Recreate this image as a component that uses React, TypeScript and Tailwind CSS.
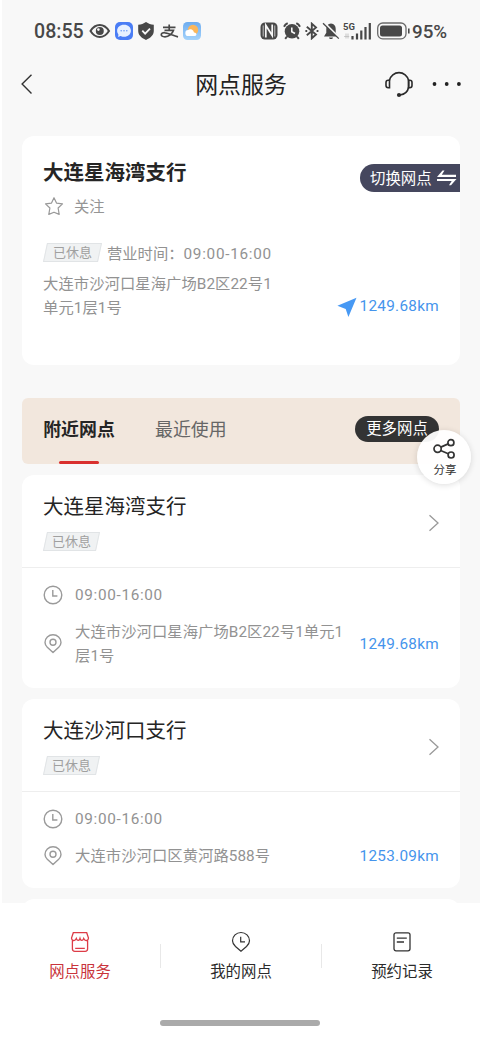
import type { ReactNode } from "react";

const branches = [
  {
    name: "大连星海湾支行",
    status: "已休息",
    hours: "09:00-16:00",
    address: "大连市沙河口星海广场B2区22号1单元1层1号",
    distance: "1249.68km",
    height: "h-[213px]",
  },
  {
    name: "大连沙河口支行",
    status: "已休息",
    hours: "09:00-16:00",
    address: "大连市沙河口区黄河路588号",
    distance: "1253.09km",
    height: "h-[189px]",
  },
];

const ClockIcon = () => (
  <svg width="20" height="20" viewBox="0 0 20 20" fill="none" stroke="#9a9a9a" strokeWidth="1.4">
    <circle cx="10" cy="10" r="8.8" />
    <path d="M9.8 5v6h4.6" />
  </svg>
);

const PinIcon = () => (
  <svg width="20" height="20" viewBox="0 0 20 20" fill="none" stroke="#9a9a9a" strokeWidth="1.4">
    <path d="M10 18.6 4.3 13.2C2.8 11.7 2 10 2 8.5a8 7.7 0 0 1 16 0c0 1.5-.8 3.2-2.3 4.7z" strokeLinejoin="round" />
    <circle cx="10" cy="8.2" r="3" />
  </svg>
);

const StatusBar = () => (
  <div className="flex h-[62px] items-center pl-8 text-[#484848]">
    <span className="w-[50px] whitespace-nowrap pt-px text-[19.600px] font-medium leading-6">08:55</span>
    <svg className="ml-[5px]" width="22" height="20" viewBox="0 0 22 20" fill="none" stroke="#484848">
      <path d="M1.500 10c5-8 13.500-8 18.500 0-5 8-13.500 8-18.500 0z" strokeWidth="2" />
      <circle cx="10.800" cy="10" r="4" fill="#484848" stroke="none" />
      <circle cx="9.400" cy="8.600" r="1.300" fill="#f8f8f8" stroke="none" />
    </svg>
    <svg className="ml-[3px]" width="20" height="20" viewBox="0 0 20 20">
      <rect x="1" y="1" width="18" height="18" rx="5" fill="#4a7df5" />
      <path d="M10 3.800c-4 0-6.900 2.600-6.900 6s2.900 6 6.900 6c4.100 0 6.900-2.600 6.900-6s-2.800-6-6.900-6zM4.500 13l-.4 3 3-1.200z" fill="#e7f0ff" />
      <g fill="#6b9bf7">
        <circle cx="7.200" cy="9.800" r=".8" />
        <circle cx="10" cy="9.800" r=".8" />
        <circle cx="12.800" cy="9.800" r=".8" />
      </g>
    </svg>
    <svg className="ml-[3px]" width="18" height="20" viewBox="0 0 18 20">
      <path d="M9 1c2.400 1.700 4.800 2.500 7.800 2.700v6.100c0 4.200-2.900 7-7.800 9.200-4.900-2.200-7.800-5-7.800-9.200V3.700C4.200 3.500 6.600 2.700 9 1z" fill="#484848" />
      <path d="m5.300 9.700 2.800 2.900 4.900-5" fill="none" stroke="#f8f8f8" strokeWidth="1.800" />
    </svg>
    <svg className="ml-[5px]" width="19" height="20" viewBox="0 0 19 20" fill="none" stroke="#484848" strokeWidth="1.700">
      <path d="M3 6.300h12.500M9.200 3.500v5.700M4.500 9.300h9c-1 3.400-4.800 6.500-8.500 6.500-2.600 0-3.900-1-3.700-2.300.2-1.400 1.800-2 3.900-1.700 4.200.5 7.800 2.900 12.800 4" />
    </svg>
    <svg className="ml-[3px]" width="20" height="20" viewBox="0 0 20 20">
      <defs>
        <linearGradient id="weatherSky" x1="0" y1="0" x2="0" y2="1">
          <stop offset="0" stopColor="#6dacef" />
          <stop offset="1" stopColor="#a5d3fb" />
        </linearGradient>
      </defs>
      <rect x="1" y="1" width="18" height="18" rx="4.500" fill="url(#weatherSky)" />
      <circle cx="11" cy="8.900" r="5.200" fill="#fbb65a" />
      <path d="M6.500 15a3 3 0 0 1-.3-6 3.700 3.700 0 0 1 5.800 2.500c2.600-.3 3.400 2.900 1 3.500z" fill="#fff" />
    </svg>

    <svg className="ml-[58px]" width="18" height="18" viewBox="0 0 18 18">
      <rect x=".5" y=".5" width="17" height="17" rx="4.500" fill="#484848" />
      <path d="M5.800 15.500V3.300l6.400 10.200V2.500" fill="none" stroke="#f8f8f8" strokeWidth="1.700" />
      <path d="M3.200 14.500V3.500M14.800 3.500v11" fill="none" stroke="#f8f8f8" strokeWidth=".7" />
    </svg>
    <svg className="ml-[5px]" width="18" height="18" viewBox="0 0 18 18" fill="none" stroke="#484848">
      <circle cx="9" cy="9.300" r="7.300" fill="#484848" stroke="none" />
      <path d="M1 4.700a8 8 0 0 1 3.700-3.500M13.300 1.200A8 8 0 0 1 17 4.700M4 14.500l-1.800 2.300M14 14.500l1.800 2.300" strokeWidth="2" />
      <path d="M8.800 5.500v4.200l3.200 1.800" stroke="#f8f8f8" strokeWidth="1.600" />
    </svg>
    <svg className="ml-[4px]" width="14" height="18" viewBox="0 0 14 18" fill="none" stroke="#484848" strokeWidth="1.900">
      <path d="m1.800 4.700 9.200 7.800-4.200 3.800V1.700L11 5.400l-9.200 7.800" />
      <path d="M11.600 9h1.800M.4 9h1.800" />
    </svg>
    <svg className="ml-[3px]" width="18" height="18" viewBox="0 0 18 18">
      <path d="M9 1.500c3.200.4 4.700 2.500 4.700 5.300v4l2.300 3.700H2l2.300-3.700v-4C4.300 4 5.800 1.900 9 1.500zM7 15.600h4c-.2 2-3.800 2-4 0z" fill="#484848" />
      <path d="m2 .5 16 15.800" stroke="#f8f8f8" strokeWidth="2" />
      <path d="m1 1.200 15.800 15.400" stroke="#484848" strokeWidth="1.300" />
    </svg>
    <div className="relative ml-[3px] h-[18px] w-[29px]">
      <span className="absolute left-0 top-0 text-[9.500px] font-bold leading-[10px]">5G</span>
      <svg width="29" height="18" viewBox="0 0 29 18">
        <path d="M3 11.500v5M1.200 14.500h5M5 11.500v5" stroke="#c4c4c4" />
        <path d="M9.500 14v3.500M14 11.500v6M18.300 8.500v9M22.500 5v12.500M26.800 1v16.500" stroke="#484848" strokeWidth="2.200" />
      </svg>
    </div>
    <svg className="ml-[5px]" width="34" height="18" viewBox="0 0 34 18">
      <rect x=".7" y="1" width="28.300" height="15.800" rx="5" fill="none" stroke="#6a6a6a" strokeWidth="1.300" />
      <rect x="3" y="3.500" width="22" height="11" rx="2.500" fill="#484848" />
      <path d="M31.800 6.500v5" stroke="#484848" strokeWidth="1.600" />
    </svg>
    <span className="ml-[1px] pt-px text-[18.800px] font-medium leading-6">95%</span>
  </div>
);

const Header = () => (
  <header className="flex h-11 items-center justify-between pl-4 pr-[18px]">
    <svg width="76" height="24" viewBox="0 0 76 24" fill="none" stroke="#333" strokeWidth="1.400">
      <path d="m13.500 2.700-9.400 9.400 9.400 9.400" />
    </svg>
    <h1 className="pl-[4px] pt-[3px] text-[22.900px] leading-8 text-[#222]">网点服务</h1>
    <div className="flex items-center gap-[18px]">
      <svg width="30" height="30" viewBox="0 0 30 30" fill="none" stroke="#2b2b2b" strokeWidth="1.600">
        <path d="M5.300 11.500a10 10.400 0 0 1 19.400 0v6.500c-1 5-4.200 7.500-8.700 8" />
        <path d="M5.500 11.200v7.500H4.200c-1.300 0-2.200-.9-2.200-2.200v-3.100c0-1.300.9-2.200 2.200-2.200zM24.500 11.200v7.500h1.300c1.300 0 2.200-.9 2.200-2.200v-3.100c0-1.300-.9-2.200-2.200-2.200z" />
        <circle cx="15" cy="26" r="2.100" fill="#2b2b2b" stroke="none" />
      </svg>
      <svg width="30" height="6" viewBox="0 0 30 6" fill="#222">
        <circle cx="2.500" cy="3" r="1.900" />
        <circle cx="14.700" cy="3" r="1.900" />
        <circle cx="26.900" cy="3" r="1.900" />
      </svg>
    </div>
  </header>
);

const StatusBadge = ({ children, wide = false }: { children: ReactNode; wide?: boolean }) => (
  <span
    className={`flex h-[19px] -skew-x-12 items-center justify-center border border-[#e1e4e6] bg-[#f0f2f3] ${
      wide ? "w-[55px]" : "w-[53px]"
    }`}
  >
    <span className="skew-x-12 text-[13px] leading-4 text-[#a0a0a0]">{children}</span>
  </span>
);

const CurrentBranch = () => (
  <section className="mt-[30px] h-[229px] rounded-xl bg-white pl-[21px] pt-[22px]">
    <div className="flex items-start justify-between">
      <h2 className="pt-px text-[20.500px] font-bold leading-7 text-[#252525]">大连星海湾支行</h2>
      <button className="mt-[6px] flex h-7 w-[100px] items-center rounded-l-full bg-[#45475e] pl-[10px] text-[15.400px] leading-6 text-white">
        <span className="pt-[2px]">切换网点</span>
        <svg className="ml-[5px]" width="20" height="16" viewBox="0 0 20 16" fill="#fff">
          <path d="M0 6.900 5.500.6h2L4.800 4.700H19v2.200zM19.500 8.900 14 15.200h-2l2.700-4.100H0V8.900z" />
        </svg>
      </button>
    </div>
    <div className="mt-[2px] flex h-6 items-center text-[15.300px] text-[#959595]">
      <svg className="ml-[1px]" width="20" height="20" viewBox="0 0 20 20" fill="none" stroke="#999" strokeWidth="1.200">
        <path d="m10 1.700 2.500 5.400 6 .8-4.400 4.100 1.100 6.400L10 16.200l-5.200 2.200 1.100-6.400-4.400-4.100 6-.8z" strokeLinejoin="round" />
      </svg>
      <span className="ml-[10px] pt-[2px]">关注</span>
    </div>
    <div className="mt-[22px] flex h-6 items-center pl-[2px]">
      <StatusBadge wide>已休息</StatusBadge>
      <span className="ml-[7px] pt-[4px] text-[15.300px] leading-6 text-[#929292]">
        营业时间：<span className="tracking-[.72px]">09:00-16:00</span>
      </span>
    </div>
    <div className="mt-[8px] flex h-12 items-end justify-between pr-[21px]">
      <p className="w-[240px] pt-px text-[15.300px] leading-6 tracking-[.08px] text-[#929292]">大连市沙河口星海广场B2区22号1单元1层1号</p>
      <div className="flex h-7 items-center whitespace-nowrap text-[15.300px] tracking-[.3px] text-[#4594ec]">
        <svg className="mr-[3px] mt-[2px]" width="20" height="20" viewBox="0 0 20 20" fill="#4799f4">
          <path d="M19.500.8 11.400 20 8.700 12.100.4 8.700z" />
        </svg>
        <span className="pt-px">1249.68km</span>
      </div>
    </div>
  </section>
);

const BranchTabs = () => (
  <div className="mt-[33px] flex h-[66px] rounded-md bg-[#f2e7dd] pl-[21px] pr-[21px] text-[17.900px]">
    <div className="flex w-[72px] flex-col items-center">
      <span className="mt-[20px] whitespace-nowrap font-bold leading-6 text-[#252525]">附近网点</span>
      <span className="mt-[19px] h-[3px] w-10 rounded-full bg-[#d9302f]" />
    </div>
    <span className="ml-[40px] mt-[20px] leading-6 text-[#666]">最近使用</span>
    <button className="ml-auto mt-[18px] flex h-[26px] w-[84px] items-center justify-center rounded-full bg-[#333] pt-[2px] text-[15.400px] text-white">
      更多网点
    </button>
  </div>
);

const BranchCard = ({ branch }: { branch: (typeof branches)[number] }) => (
  <article className={`mt-[11px] rounded-xl bg-white ${branch.height}`}>
    <div className="flex h-[93px] items-center justify-between border-b border-[#eee] pl-[21px] pr-[20px]">
      <div>
        <h3 className="mt-[2px] text-[20.500px] leading-7 text-[#252525]">{branch.name}</h3>
        <div className="mt-[11px] pl-[2px]">
          <StatusBadge>{branch.status}</StatusBadge>
        </div>
      </div>
      <svg className="mt-[4px]" width="12" height="18" viewBox="0 0 12 18" fill="none" stroke="#999" strokeWidth="1.300">
        <path d="m1.500 1.200 8.500 7.800-8.500 7.800" />
      </svg>
    </div>
    <div className="flex flex-col gap-[13px] pl-[21px] pr-[21px] pt-[15px] text-[15.300px] leading-6 text-[#929292]">
      <div className="flex items-center">
        <ClockIcon />
        <span className="ml-[12px] tracking-[.68px]">{branch.hours}</span>
      </div>
      <div className="flex items-center">
        <PinIcon />
        <p className="ml-[12px] w-[275px] pt-px leading-[23.500px] tracking-[.08px]">{branch.address}</p>
        <span className="ml-auto tracking-[.3px] text-[#4594ec]">{branch.distance}</span>
      </div>
    </div>
  </article>
);

const ShareButton = () => (
  <button className="absolute left-[417px] top-[430px] flex h-[54px] w-[54px] flex-col items-center rounded-full bg-white/95 pt-[8px] shadow-[0_1px_6px_rgba(0,0,0,0.14)]">
    <svg width="22" height="21" viewBox="0 0 22 21" fill="none" stroke="#333" strokeWidth="1.700">
      <circle cx="4.600" cy="10.800" r="3.600" />
      <circle cx="17.900" cy="4.700" r="3" />
      <circle cx="18.100" cy="17" r="3" />
      <path d="m7.800 9.100 7.400-3.200M7.600 12.500l7.700 3.200" />
    </svg>
    <span className="mt-[3px] pl-[2px] text-[11.500px] leading-4 text-[#333]">分享</span>
  </button>
);

const BottomNav = () => (
  <nav className="h-[135px] bg-white">
    <div className="flex pt-7 text-[15.400px] leading-6 text-[#2b2b2b]">
      <div className="flex w-[160px] flex-col items-center text-[#c9343b]">
        <svg width="20" height="22" viewBox="0 0 20 22" fill="none" stroke="#dd3c47" strokeWidth="1.300">
          <path d="M3.300 1.700h13.400L18.500 7c0 2.800-3.400 3.700-4.800.5-.9 2.500-3 2.700-3.700 0-.7 2.700-2.800 2.500-3.700 0C4.900 10.700 1.500 9.800 1.500 7zM2.400 9.500v8.300c0 1.600.8 2.500 2.400 2.500h10.400c1.600 0 2.400-.9 2.400-2.500V9.500M5.200 17.300h9.600" />
        </svg>
        <span className="mt-[7px]">网点服务</span>
      </div>
      <div className="mt-[13px] h-6 w-px bg-[#e8e8e8]" />
      <div className="flex w-[160px] flex-col items-center">
        <svg width="20" height="22" viewBox="0 0 20 22" fill="none" stroke="#333" strokeWidth="1.200">
          <path d="M10 20.200 4.500 15.500C2.500 13.600 1.500 11.700 1.500 9.800a8.500 8.300 0 0 1 17 0c0 1.900-1 3.800-3 5.700z" />
          <path d="M9.700 5.800v5h4.300" />
        </svg>
        <span className="mt-[7px]">我的网点</span>
      </div>
      <div className="mt-[13px] h-6 w-px bg-[#e8e8e8]" />
      <div className="flex flex-1 flex-col items-center pl-[2px]">
        <svg width="20" height="22" viewBox="0 0 20 22" fill="none" stroke="#333" strokeWidth="1.300">
          <rect x="2" y="1.800" width="16" height="18" rx="2" />
          <path d="M4.800 7.200h10M4.800 11h7.200" />
        </svg>
        <span className="mt-[7px]">预约记录</span>
      </div>
    </div>
    <div className="mx-auto mt-[36px] h-[6px] w-[160px] rounded-full bg-[#aaa]" />
  </nav>
);

export default function App() {
  return (
    <div className="relative h-[1038px] w-[480px] overflow-hidden bg-white font-[Roboto,'Noto_Sans_CJK_SC',sans-serif]">
      <div className="ml-[2px] h-[903px] overflow-hidden bg-[#f8f8f8]">
        <StatusBar />
        <Header />
        <main className="ml-5 w-[438px]">
          <CurrentBranch />
          <BranchTabs />
          {branches.map((branch) => (
            <BranchCard key={branch.name} branch={branch} />
          ))}
          <div className="mt-[11px] h-10 rounded-t-xl bg-white" />
        </main>
      </div>
      <ShareButton />
      <BottomNav />
    </div>
  );
}
